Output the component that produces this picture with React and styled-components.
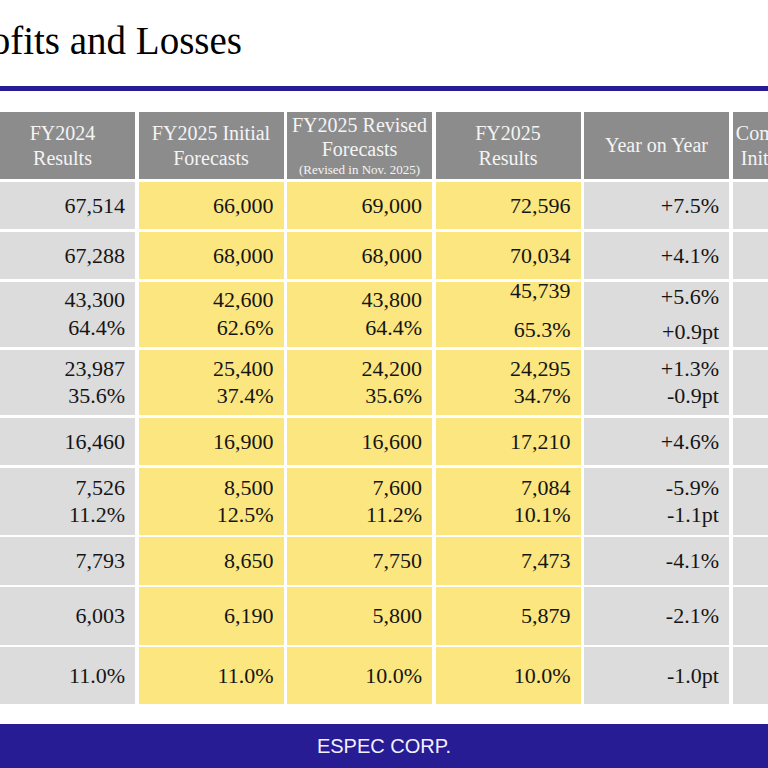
import React from 'react';
import styled, { createGlobalStyle } from 'styled-components';

const GlobalStyle = createGlobalStyle`
  html, body {
    margin: 0;
    padding: 0;
    background: #ffffff;
    overflow: hidden;
  }
`;

const Slide = styled.div`
  width: 768px;
  height: 768px;
  display: flex;
  flex-direction: column;
  overflow: hidden;
  font-family: "Liberation Serif", "Times New Roman", serif;
`;

const Title = styled.h1`
  margin: 21px 0 0 -44px;
  font-size: 39px;
  line-height: 39px;
  font-weight: 400;
  color: #000;
  white-space: nowrap;
`;

const Rule = styled.div`
  height: 5px;
  margin-top: 26px;
  background: #281c94;
`;

const Table = styled.div`
  display: grid;
  grid-template-columns: repeat(6, 145px);
  grid-template-rows: 67px 47.5px 47.5px 65.5px 65.5px 47.5px 67px 47.5px 57.5px 57px;
  column-gap: 3.5px;
  row-gap: 2.5px;
  margin: 21px 0 0 -10px;
`;

const HeadCell = styled.div`
  background: #8c8c8c;
  color: #f4f4f4;
  display: flex;
  flex-direction: column;
  align-items: center;
  justify-content: center;
  text-align: center;
  white-space: nowrap;
  font-size: 20px;
  line-height: ${(p) => (p.$tight ? '24px' : '25px')};
`;

const Note = styled.span`
  font-size: 13px;
  line-height: 18px;
`;

const Cell = styled.div`
  background: ${(p) => (p.$tone === 'yellow' ? '#fbe67f' : '#dcdcdc')};
  color: #151515;
  display: flex;
  flex-direction: column;
  align-items: flex-end;
  justify-content: center;
  padding: 0 10px ${(p) => p.$lift || 0}px 0;
  font-size: 22px;
  line-height: ${(p) => p.$lh || 27}px;
  white-space: nowrap;
`;

const Footer = styled.div`
  margin-top: auto;
  height: 44px;
  background: #281c94;
  color: #f2f0ff;
  display: flex;
  align-items: center;
  justify-content: center;
  font-family: "Liberation Sans", Arial, sans-serif;
  font-size: 20px;
`;

const tones = ['gray', 'yellow', 'yellow', 'yellow', 'gray', 'gray'];

// a cell is a string, a list of lines, or { lines, lh, lift } when its spacing differs
const rows = [
  { cells: ['67,514', '66,000', '69,000', '72,596', '+7.5%', '+10.0%'] },
  { cells: ['67,288', '68,000', '68,000', '70,034', '+4.1%', '+3.0%'] },
  {
    lh: 28,
    cells: [
      ['43,300', '64.4%'],
      ['42,600', '62.6%'],
      ['43,800', '64.4%'],
      { lines: ['45,739', '65.3%'], lh: 39, lift: 9 },
      { lines: ['+5.6%', '+0.9pt'], lh: 35, lift: 1 },
      ['+7.4%', '+2.7pt'],
    ],
  },
  {
    cells: [
      ['23,987', '35.6%'],
      ['25,400', '37.4%'],
      ['24,200', '35.6%'],
      ['24,295', '34.7%'],
      ['+1.3%', '-0.9pt'],
      ['-4.4%', '-2.7pt'],
    ],
  },
  { cells: ['16,460', '16,900', '16,600', '17,210', '+4.6%', '+1.8%'] },
  {
    cells: [
      ['7,526', '11.2%'],
      ['8,500', '12.5%'],
      ['7,600', '11.2%'],
      ['7,084', '10.1%'],
      ['-5.9%', '-1.1pt'],
      ['-16.7%', '-2.4pt'],
    ],
  },
  { cells: ['7,793', '8,650', '7,750', '7,473', '-4.1%', '-13.6%'] },
  { cells: ['6,003', '6,190', '5,800', '5,879', '-2.1%', '-5.0%'] },
  { cells: ['11.0%', '11.0%', '10.0%', '10.0%', '-1.0pt', '-1.0pt'] },
];

const toCell = (val) => {
  if (typeof val === 'string') return { lines: [val] };
  if (Array.isArray(val)) return { lines: val };
  return val;
};

const App = () => {
  return (
    <Slide>
      <GlobalStyle />
      <Title>Profits and Losses</Title>
      <Rule />

      <Table>
        {/* header row */}
        <HeadCell>
          <span>FY2024</span>
          <span>Results</span>
        </HeadCell>
        <HeadCell>
          <span>FY2025 Initial</span>
          <span>Forecasts</span>
        </HeadCell>
        <HeadCell $tight>
          <span>FY2025 Revised</span>
          <span>Forecasts</span>
          <Note>(Revised in Nov. 2025)</Note>
        </HeadCell>
        <HeadCell>
          <span>FY2025</span>
          <span>Results</span>
        </HeadCell>
        <HeadCell>
          <span>Year on Year</span>
        </HeadCell>
        <HeadCell>
          <span>Comparison with</span>
          <span>Initial Forecasts</span>
        </HeadCell>

        {rows.map((row, r) =>
          row.cells.map((val, c) => {
            const cell = toCell(val);
            return (
              <Cell key={`${r}-${c}`} $tone={tones[c]} $lh={cell.lh || row.lh} $lift={cell.lift}>
                {cell.lines.map((v) => (
                  <span key={v}>{v}</span>
                ))}
              </Cell>
            );
          })
        )}
      </Table>

      <Footer>ESPEC CORP.</Footer>
    </Slide>
  );
};

export default App;
